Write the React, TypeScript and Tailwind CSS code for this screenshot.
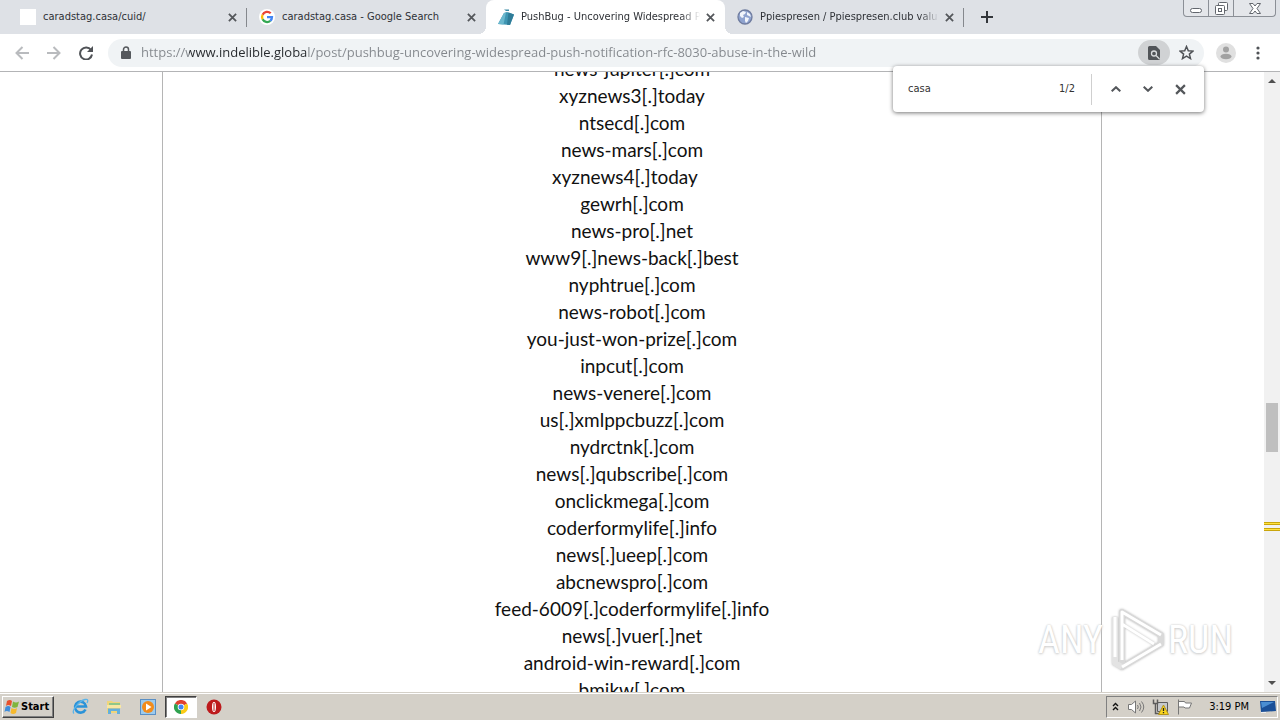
import { useState } from "react";
import type { ReactNode } from "react";

const domains = [
  "news-jupiter[.]com",
  "xyznews3[.]today",
  "ntsecd[.]com",
  "news-mars[.]com",
  "xyznews4[.]today   ",
  "gewrh[.]com",
  "news-pro[.]net",
  "www9[.]news-back[.]best",
  "nyphtrue[.]com",
  "news-robot[.]com",
  "you-just-won-prize[.]com",
  "inpcut[.]com",
  "news-venere[.]com",
  "us[.]xmlppcbuzz[.]com",
  "nydrctnk[.]com",
  "news[.]qubscribe[.]com",
  "onclickmega[.]com",
  "coderformylife[.]info",
  "news[.]ueep[.]com",
  "abcnewspro[.]com",
  "feed-6009[.]coderformylife[.]info",
  "news[.]vuer[.]net",
  "android-win-reward[.]com",
  "bmikw[.]com",
];

const Cross = ({ size, width = 2 }: { size: number; width?: number }) => (
  <svg width={size} height={size} viewBox="0 0 10 10" fill="none" stroke="#54575b" strokeWidth={width}>
    <path d="M1 1l8 8M9 1l-8 8" />
  </svg>
);

const GoogleIcon = () => (
  <svg width="16" height="16" viewBox="0 0 16 16">
    <circle cx="8" cy="8" r="8" fill="#fff" />
    <g fill="none" strokeWidth="2.3">
      <path d="M11.7 4.3A5 5 0 0 0 3.6 5.7" stroke="#ea4335" />
      <path d="M3.6 5.7a5 5 0 0 0 0 4.6" stroke="#fbbc05" />
      <path d="M3.6 10.3a5 5 0 0 0 7.7 1.6" stroke="#34a853" />
      <path d="M11.3 11.9A5 5 0 0 0 13 8.1H8" stroke="#4285f4" />
    </g>
  </svg>
);

const BugIcon = () => (
  <svg width="16" height="16" viewBox="0 0 16 16">
    <path d="M6 .5h5v1.500H8z" fill="#3d8ba5" />
    <path d="M6 4l3-1 7 2.500L12 16 0 15z" fill="#3f96b3" />
    <path d="M6 4l2-.6L5.500 15.500 0 15z" fill="#6bb8ce" />
    <path d="M10.500 3.500l5.500 2L12 16l-3-.3z" fill="#2f7c98" />
  </svg>
);

const GlobeIcon = () => (
  <svg width="16" height="16" viewBox="0 0 16 16">
    <circle cx="8" cy="8" r="7" fill="#8fa3cf" stroke="#6f7c9f" strokeWidth="1.3" />
    <path d="M3 4l3-2 3 1-1 2-2 1 1 2-2 1-2-2zM10 3l3 2 1 3-2-1-2-1zM8 8l4 1-1 3-2 2-1-2z" fill="#f2f5fb" />
  </svg>
);

type TabProps = { title: string; icon: ReactNode; active?: boolean; divider?: boolean };

const Tab = ({ title, icon, active, divider }: TabProps) => (
  <div
    role="tab"
    aria-selected={!!active}
    className={`relative flex h-[34px] min-w-0 w-[239px] items-center pl-3 pr-[7px] ${active ? "rounded-t-lg bg-white" : ""}`}
  >
    <span className="mr-[7px] h-4 w-4 shrink-0">{icon}</span>
    <span
      className={`flex-1 overflow-hidden whitespace-nowrap pt-px text-[#2e3136] ${
        title.length > 31 ? "[mask-image:linear-gradient(to_right,#000_88%,transparent_99%)]" : ""
      }`}
    >
      {title}
    </span>
    <button type="button" aria-label={`Close ${title}`} className="flex h-4 w-4 shrink-0 items-center justify-center">
      <Cross size={9} />
    </button>
    {divider && <span className="absolute right-0 top-2 h-[19px] w-px bg-[#85888d]" />}
    {active && (
      <>
        <span className="absolute -left-2 bottom-0 h-2 w-2 bg-[radial-gradient(circle_at_0_0,#dee1e6_8px,#fff_8px)]" />
        <span className="absolute -right-2 bottom-0 h-2 w-2 bg-[radial-gradient(circle_at_100%_0,#dee1e6_8px,#fff_8px)]" />
      </>
    )}
  </div>
);

const TabStrip = () => (
  <div className="flex h-[34px] shrink-0 bg-[#dee1e6] pl-2 text-[11px]">
    <div role="tablist" className="flex min-w-0">
      <Tab title="caradstag.casa/cuid/" icon={<span className="block h-4 w-4 bg-white" />} divider />
      <Tab title="caradstag.casa - Google Search" icon={<GoogleIcon />} />
      <Tab title="PushBug - Uncovering Widespread P" icon={<BugIcon />} active />
      <Tab title="Ppiespresen / Ppiespresen.club valu" icon={<GlobeIcon />} divider />
    </div>
    <button type="button" aria-label="New tab" className="ml-[9px] flex w-7 items-center justify-center">
      <svg width="12" height="12" viewBox="0 0 12 12" stroke="#33363b" strokeWidth="2">
        <path d="M6 0v12M0 6h12" />
      </svg>
    </button>
    {/* Window buttons */}
    <div className="ml-auto mr-1 flex h-[17px] rounded-b border border-t-0 border-[#8b8f96] bg-[#e4e6ea]">
      <button type="button" aria-label="Minimize" className="flex w-[25px] items-end justify-center border-r border-[#8b8f96] pb-[3px]">
        <span className="h-[5px] w-3 rounded-sm border border-[#62666d] bg-white" />
      </button>
      <button type="button" aria-label="Restore" className="flex w-[25px] items-center justify-center border-r border-[#8b8f96]">
        <svg width="13" height="13" viewBox="0 0 13 13" fill="#fff" stroke="#62666d">
          <rect x="3.500" y=".5" width="9" height="8" rx="1" />
          <rect x=".5" y="3.500" width="9" height="9" rx="1" />
          <rect x="3.500" y="6.500" width="3" height="3" />
        </svg>
      </button>
      <button type="button" aria-label="Close" className="flex w-[41px] items-center justify-center">
        <svg width="12" height="11" viewBox="0 0 12 11" fill="#fff" stroke="#62666d">
          <path d="M.5.5h3.500L6 3 8 .5h3.500L8 5.500l3.500 5H8L6 8l-2 2.500H.5l3.500-5z" />
        </svg>
      </button>
    </div>
  </div>
);

const Toolbar = () => {
  const [url, setUrl] = useState(
    "https://www.indelible.global/post/pushbug-uncovering-widespread-push-notification-rfc-8030-abuse-in-the-wild"
  );

  return (
    <div className="flex h-[38px] shrink-0 items-center border-b border-[#b3b4b6] bg-white px-[6px]">
      <button type="button" aria-label="Back" className="flex w-8 justify-center">
        <svg width="14" height="14" viewBox="0 0 14 14" fill="none" stroke="#b9bbbe" strokeWidth="2">
          <path d="M14 7H1M7.500 1L1.500 7l6 6" />
        </svg>
      </button>
      <button type="button" aria-label="Forward" className="flex w-8 justify-center">
        <svg width="14" height="14" viewBox="0 0 14 14" fill="none" stroke="#b9bbbe" strokeWidth="2">
          <path d="M0 7h13M6.500 1l6 6-6 6" />
        </svg>
      </button>
      <button type="button" aria-label="Reload" className="flex w-8 justify-center">
        <svg width="14" height="14" viewBox="0 0 14 14" fill="none" stroke="#505357" strokeWidth="2">
          <path d="M12 4A6 6 0 1 0 13 8.500" />
          <path d="M14 0v6H8z" fill="#505357" stroke="none" />
        </svg>
      </button>
      <div className="ml-[6px] flex h-7 min-w-0 flex-1 items-center rounded-full bg-[#f0f3f5] pl-[13px]">
        <svg width="10" height="13" viewBox="0 0 10 13" className="shrink-0">
          <rect x="0" y="5" width="10" height="8" rx="1" fill="#55585c" />
          <path d="M2.500 5.500V3.500a2.500 2.500 0 0 1 5 0v2" fill="none" stroke="#55585c" strokeWidth="1.500" />
        </svg>
        <input
          type="text"
          aria-label="Address"
          value={url}
          onChange={(e) => setUrl(e.target.value)}
          spellCheck={false}
          className="ml-[10px] min-w-0 flex-1 bg-[linear-gradient(to_right,#83878c_48px,#25282c_48px,#25282c_167px,#83878c_167px)] bg-clip-text font-['Open_Sans','Noto_Sans',sans-serif] text-[13px] text-transparent outline-none"
        />
        <button type="button" aria-label="Find in page" className="flex h-[25px] w-8 shrink-0 items-center justify-center rounded-full bg-[#d0d2d4]">
          <svg width="12" height="14" viewBox="0 0 12 14">
            <path d="M1.500 0H8l4 4v8.500a1.500 1.500 0 0 1-1.500 1.500h-9A1.500 1.500 0 0 1 0 12.500v-11A1.500 1.500 0 0 1 1.500 0z" fill="#515458" />
            <circle cx="6" cy="7.500" r="2.500" fill="#515458" stroke="#d9dbdd" strokeWidth="1.300" />
            <path d="M8 9.500l3.500 3.500" stroke="#d9dbdd" strokeWidth="1.300" />
          </svg>
        </button>
        <button type="button" aria-label="Bookmark this page" className="mr-[2px] flex h-7 w-8 shrink-0 items-center justify-center">
          <svg width="15" height="15" viewBox="0 0 15 15" fill="none" stroke="#505357" strokeWidth="1.500">
            <path d="M7.500 1.500l1.800 4.200 4.600.4-3.500 3 1.100 4.500-4-2.400-4 2.400 1.100-4.500-3.500-3 4.600-.4z" />
          </svg>
        </button>
      </div>
      <button type="button" aria-label="Profile" className="ml-3 flex w-5 justify-center">
        <svg width="20" height="20" viewBox="0 0 20 20">
          <circle cx="10" cy="10" r="10" fill="#e0e0e0" />
          <circle cx="10" cy="6.500" r="3" fill="#a2a2a2" />
          <ellipse cx="10" cy="13.500" rx="5.500" ry="2.800" fill="#a2a2a2" />
        </svg>
      </button>
      <button type="button" aria-label="Menu" className="ml-[6px] flex w-8 justify-center">
        <svg width="4" height="14" viewBox="0 0 4 14" fill="#505357">
          <circle cx="2" cy="2" r="1.600" />
          <circle cx="2" cy="7" r="1.600" />
          <circle cx="2" cy="12" r="1.600" />
        </svg>
      </button>
    </div>
  );
};

const FindBar = () => {
  const [query, setQuery] = useState("casa");

  return (
    <div className="absolute right-[76px] top-[66px] flex h-[46px] w-[311px] items-center rounded-sm bg-white pl-[15px] pr-2 text-[11px] text-[#333] shadow-[0_1px_4px_rgba(0,0,0,0.55)]">
      <input type="text" aria-label="Find" value={query} onChange={(e) => setQuery(e.target.value)} className="min-w-0 flex-1 pt-px outline-none" />
      <span className="mr-4 pt-px">1/2</span>
      <span className="mr-2 h-[31px] w-px bg-[#cfcfcf]" />
      <button type="button" aria-label="Previous" className="flex w-8 justify-center">
        <svg width="10" height="6" viewBox="0 0 10 6" fill="none" stroke="#54575b" strokeWidth="2">
          <path d="M.7 5.300L5 1.200l4.300 4.100" />
        </svg>
      </button>
      <button type="button" aria-label="Next" className="flex w-8 justify-center">
        <svg width="10" height="6" viewBox="0 0 10 6" fill="none" stroke="#54575b" strokeWidth="2">
          <path d="M.7.700L5 4.800 9.300.7" />
        </svg>
      </button>
      <button type="button" aria-label="Close find bar" className="flex w-8 justify-center">
        <Cross size={11} />
      </button>
    </div>
  );
};

const Watermark = () => (
  <div className="absolute bottom-[48px] right-[47px] flex h-[64px] items-center font-['Liberation_Sans_Narrow','Roboto_Condensed','DejaVu_Sans_Condensed',sans-serif] text-[38px] leading-none text-white [text-shadow:0_0_2px_#c4c4c4,0_1px_3px_#d2d2d2]">
    <span>ANY</span>
    <svg width="58" height="64" viewBox="0 0 58 64" fill="none" strokeLinejoin="round" className="ml-1 mr-[3px] drop-shadow-[0_0_1px_#bbb]">
      <path d="M15 4l39 23v9L15 59z" stroke="#d9d9d9" strokeWidth="6" />
      <path d="M8 9v46l7 4" stroke="#e3e3e3" strokeWidth="6" />
      <path d="M15 52V4l39 23M15 16l32 20M8 9v40M15 59l39-23" stroke="#fff" strokeWidth="3" />
    </svg>
    <span>RUN</span>
  </div>
);

const ScrollBar = () => (
  <div className="flex w-4 shrink-0 flex-col items-center bg-[#f1f1f1]">
    <svg width="8" height="17" viewBox="0 0 8 17" fill="#505050" className="shrink-0">
      <path d="M0 11l4-4 4 4z" />
    </svg>
    <div className="w-full flex-[314]" />
    <div className="h-[49px] w-3 shrink-0 bg-[#bfbfbf]" />
    <div className="w-full flex-[70]" />
    <div className="h-[9px] w-full shrink-0">
      <div className="h-[3px] border-y border-[#c9a50c] bg-[#ffe13d]" />
      <div className="mt-[3px] h-[3px] border-y border-[#c9a50c] bg-[#ffe13d]" />
    </div>
    <div className="w-full flex-[144]" />
    <svg width="8" height="17" viewBox="0 0 8 17" fill="#505050" className="shrink-0">
      <path d="M0 6l4 4 4-4z" />
    </svg>
  </div>
);

const Page = () => (
  <div className="flex min-h-0 flex-1 bg-white">
    <main className="flex flex-1 justify-center">
      <ul className="flex w-[940px] flex-col justify-center overflow-hidden border-x border-[#b5b5b5] pb-[6px] text-center font-['Lato','Open_Sans',sans-serif] text-[19px] leading-[27px] text-[#111]">
        {domains.map((domain) => (
          <li key={domain} className="shrink-0 whitespace-pre">
            {domain}
          </li>
        ))}
      </ul>
    </main>
    <ScrollBar />
  </div>
);

const TaskBar = () => (
  <footer className="flex h-7 shrink-0 items-center border-t border-[#d4d0c8] bg-[#d4d0c8] px-[2px] text-[11px] shadow-[inset_0_1px_0_#fff]">
    <button
      type="button"
      className="flex h-[22px] w-[52px] items-center gap-px border border-b-[#404040] border-l-white border-r-[#404040] border-t-white pl-px font-bold text-black shadow-[inset_-1px_-1px_0_#808080]"
    >
      <svg width="16" height="16" viewBox="0 0 16 16" className="shrink-0">
        <path d="M3 2q3-2 5 0L7 7Q4 5 2 7z" fill="#e8512d" />
        <path d="M9 2.500q3 2 6 0L13.500 8q-3 1.500-5.500 0z" fill="#7fb53c" />
        <path d="M1.500 8q3-2 5 0l-1 5q-3-2-5 0z" fill="#3f8ddb" />
        <path d="M7.500 9q3 2 5.500 0l-1 5q-3 2-5.500 0z" fill="#f6b92c" />
      </svg>
      <span className="pt-px">Start</span>
    </button>
    <div className="ml-[9px] flex items-center">
      <button type="button" aria-label="Internet Explorer" className="flex w-[34px] justify-center">
        <svg width="17" height="17" viewBox="0 0 17 17" fill="none">
          <path d="M13.500 11.500A5.500 5.500 0 1 1 14 8.500H4" stroke="#2b93d8" strokeWidth="2.600" />
          <path d="M2 15.500C-1 13 7 3 13 1.500c3-.7 3.300 1 2 3.500" stroke="#5ab4ea" strokeWidth="1.300" />
        </svg>
      </button>
      <button type="button" aria-label="Explorer" className="flex w-[34px] justify-center">
        <svg width="16" height="16" viewBox="0 0 16 16">
          <path d="M1 2h5l1 1h7v11H1z" fill="#f0d57a" />
          <path d="M3 4h11v3H3z" fill="#8fc789" />
          <path d="M1 6h14v3H1z" fill="#f8e7a2" />
          <path d="M2 15V9.500h12V15h-3v-3H5v3z" fill="#64afdc" />
        </svg>
      </button>
      <button type="button" aria-label="Media Player" className="flex w-[34px] justify-center">
        <svg width="16" height="16" viewBox="0 0 16 16">
          <rect x=".5" y=".5" width="15" height="15" fill="#9ccbee" stroke="#5a8fc4" />
          <circle cx="8" cy="8" r="6" fill="#f28c1c" />
          <path d="M6 4.500L11.500 8 6 11.500z" fill="#fff" />
        </svg>
      </button>
      <button
        type="button"
        aria-label="Chrome"
        className="flex h-[22px] w-8 items-center justify-center border border-b-white border-l-[#404040] border-r-white border-t-[#404040] bg-white shadow-[inset_1px_1px_0_#808080]"
      >
        <svg width="14" height="14" viewBox="0 0 14 14">
          <path d="M7 7L.9 3.500a7 7 0 0 1 12.200 0z" fill="#e0412f" />
          <path d="M7 7h-.1L.9 3.500A7 7 0 0 0 7 14l3-5z" fill="#2fa24f" />
          <path d="M7 7l6.100-3.500A7 7 0 0 1 7 14z" fill="#fbcb16" />
          <circle cx="7" cy="7" r="3.300" fill="#fff" />
          <circle cx="7" cy="7" r="2.500" fill="#4285f4" />
        </svg>
      </button>
      <button type="button" aria-label="Opera" className="flex w-[34px] justify-center">
        <svg width="16" height="16" viewBox="0 0 16 16">
          <circle cx="8" cy="8" r="7.500" fill="#bd1a1c" />
          <ellipse cx="8" cy="8" rx="2" ry="5" fill="#fff" />
          <path d="M8 4v8" stroke="#bd1a1c" />
        </svg>
      </button>
    </div>
    {/* Tray */}
    <div className="ml-auto flex h-[22px] w-[172px] items-center border border-b-white border-l-[#808080] border-r-white border-t-[#808080]">
      <button type="button" aria-label="Show hidden icons" className="ml-[5px]">
        <svg width="7" height="9" viewBox="0 0 7 9" fill="none" stroke="#111" strokeWidth="1.400">
          <path d="M1 4l2.500-2.500L6 4M1 8l2.500-2.500L6 8" />
        </svg>
      </button>
      <svg width="17" height="14" viewBox="0 0 17 14" className="ml-[9px]" fill="#fff" stroke="#777">
        <path d="M.5 4.500h3L7.500 1v12l-4-3.500h-3z" />
        <path d="M9.500 5q1.500 2 0 4M11.500 3q3 4 0 8M13.500 1.500q4.500 5.500 0 11" fill="none" />
      </svg>
      <svg width="17" height="16" viewBox="0 0 17 16" className="ml-[7px]">
        <path d="M5.500 3.500h10v9h-10z" fill="#c6c9cc" stroke="#5c5c5c" />
        <path d="M1.500.5v4h4v-4M3.500 5v9.500h4" fill="none" stroke="#5c5c5c" strokeWidth="1.500" />
        <path d="M11.500 6l5 9.500h-10z" fill="#f9d51d" stroke="#b4941a" />
        <path d="M11.500 9v3M11.500 13v1.300" stroke="#222" strokeWidth="1.300" />
      </svg>
      <svg width="16" height="16" viewBox="0 0 16 16" className="ml-2" fill="#fff" stroke="#777">
        <path d="M1.500.5v15M1.500 2.500h6l1 1.500h6l-2 5H8l-1-1H1.500z" />
      </svg>
      <time className="ml-auto pt-px text-black">3:19 PM</time>
      <button type="button" aria-label="Show desktop" className="ml-[11px] mr-px">
        <svg width="16" height="13" viewBox="0 0 16 13">
          <path d="M0 1h15l1 10-15 1z" fill="#1b5098" />
          <path d="M1 2h13L2 8z" fill="#4b8ed2" />
          <path d="M1 12.500h5" stroke="#eee" />
        </svg>
      </button>
    </div>
  </footer>
);

export default function App() {
  return (
    <div className="relative flex h-screen flex-col overflow-hidden font-['DejaVu_Sans_Condensed','DejaVu_Sans',sans-serif]">
      <TabStrip />
      <Toolbar />
      <Page />
      <TaskBar />
      <FindBar />
      <Watermark />
    </div>
  );
}
